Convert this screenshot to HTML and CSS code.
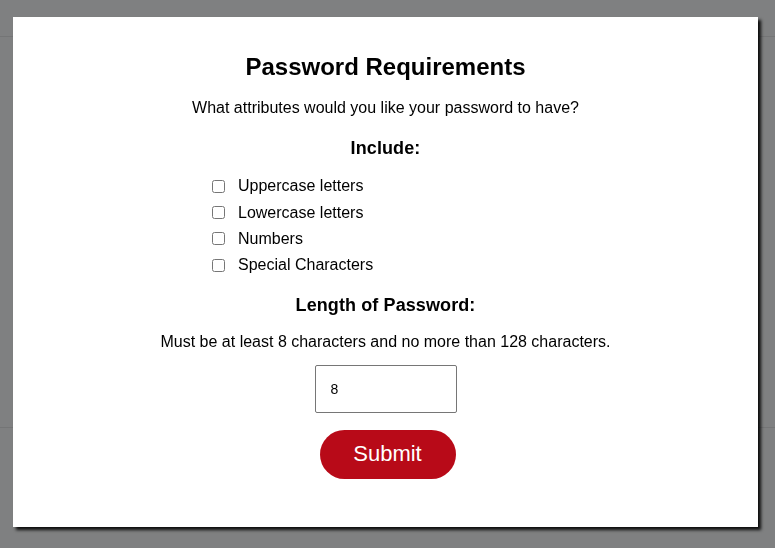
FILE: index.html
```html
<!DOCTYPE html>
<html lang="en">
<head>
<meta charset="utf-8">
<title>Password Generator</title>
<link rel="stylesheet" href="styles.css">
</head>
<body>
<div class="page">
  <header class="page-header"></header>
  <section class="page-main"></section>
</div>
<div class="overlay">
  <form class="modal">
    <h1 class="modal-title">Password Requirements</h1>
    <p class="modal-text">What attributes would you like your password to have?</p>
    <h2 class="modal-subtitle">Include:</h2>
    <ul class="options">
      <li class="option"><label><input type="checkbox" class="checkbox"><span>Uppercase letters</span></label></li>
      <li class="option"><label><input type="checkbox" class="checkbox"><span>Lowercase letters</span></label></li>
      <li class="option"><label><input type="checkbox" class="checkbox"><span>Numbers</span></label></li>
      <li class="option"><label><input type="checkbox" class="checkbox"><span>Special Characters</span></label></li>
    </ul>
    <h2 class="modal-subtitle length">Length of Password:</h2>
    <p class="modal-text hint">Must be at least 8 characters and no more than 128 characters.</p>
    <input class="length-input" type="text" value="8">
    <button class="submit" type="button">Submit</button>
  </form>
</div>
</body>
</html>
```

FILE: styles.css
```css
* { box-sizing: border-box; }
html, body {
  margin: 0;
  height: 100%;
}
body {
  background: #7f8081;
  font-family: "Liberation Sans", Arial, Helvetica, sans-serif;
  color: #000;
  overflow: hidden;
}
.page-header {
  height: 37px;
  border-bottom: 1px solid #747576;
}
.page-main {
  height: 391px;
  border-bottom: 1px solid #747576;
}
.overlay {
  position: fixed;
  inset: 0;
  padding: 17px 0 0 13px;
}
.modal {
  width: 745px;
  height: 510px;
  background: #fff;
  box-shadow: 3px 3px 3px rgba(0, 0, 0, 0.9);
  display: flex;
  flex-direction: column;
  align-items: center;
  padding-top: 36px;
}
.modal-title {
  margin: 0;
  font-size: 24px;
  line-height: 28px;
  font-weight: bold;
}
.modal-text {
  margin: 17px 0 0;
  font-size: 16px;
  line-height: 20px;
}
.modal-subtitle {
  margin: 19px 0 0;
  font-size: 18px;
  line-height: 22px;
  font-weight: bold;
  letter-spacing: 0.1px;
}
.options {
  list-style: none;
  margin: 14px 0 0;
  padding: 0 0 0 195px;
  align-self: stretch;
}
.option {
  height: 26.4px;
  font-size: 16px;
  display: flex;
  align-items: center;
}
.option label {
  display: flex;
  align-items: center;
}
.checkbox {
  margin: 0 13px 0 4px;
  width: 13px;
  height: 13px;
}
.modal-subtitle.length {
  margin-top: 15px;
}
.modal-text.hint {
  margin-top: 16px;
}
.length-input {
  margin-top: 13px;
  width: 142px;
  height: 48px;
  border: 1px solid #767676;
  border-radius: 2px;
  padding: 0 15px;
  font-family: "Liberation Sans", Arial, sans-serif;
  font-size: 14px;
  color: #000;
  outline: none;
}
.submit {
  margin: 17px 0 0 4px;
  width: 136px;
  height: 49px;
  border: none;
  border-radius: 25px;
  background: #b80a18;
  color: #fff;
  font-family: "Liberation Sans", Arial, sans-serif;
  font-size: 22px;
  cursor: pointer;
}
```
